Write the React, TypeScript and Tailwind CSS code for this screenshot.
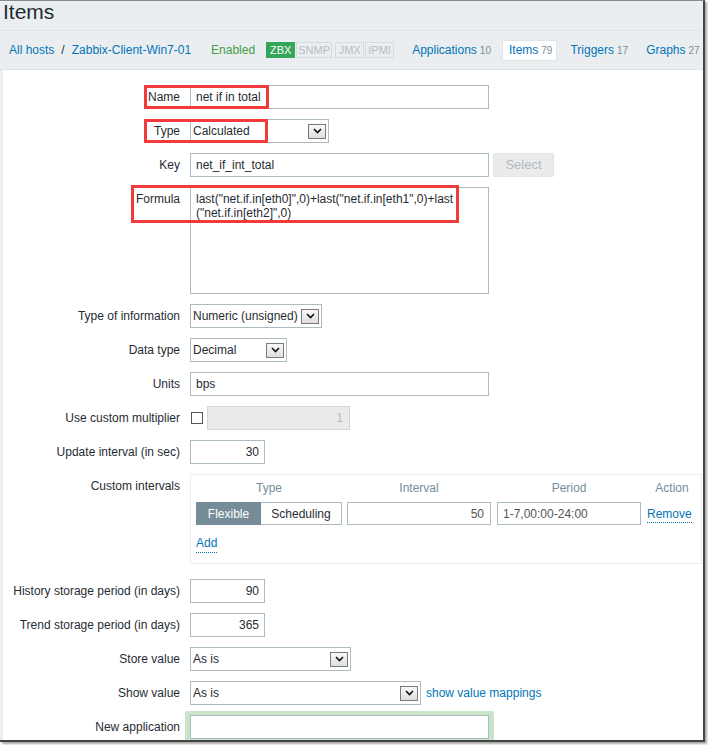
import React from "react";

const LABEL = "w-[177px] shrink-0 text-right text-[12px] leading-[14px] text-[#1f2c33]";
const INPUT =
  "h-[24px] border border-[#acbbc2] bg-white px-[5px] text-[12px] text-[#1f2c33] flex items-center";
const LINK = "text-[#0275b8]";
const BADGE = "h-[16px] border flex items-center justify-center";

function Chevron() {
  return (
    <svg width="9" height="6" viewBox="0 0 9 6">
      <path d="M1 1 L4.5 4.5 L8 1" fill="none" stroke="#111" strokeWidth="1.6" />
    </svg>
  );
}

function Select({ width, value }: { width: string; value: string }) {
  return (
    <div
      className={`${width} h-[24px] border border-[#acbbc2] bg-white flex items-center justify-between pl-[2px] pr-[2px] text-[12px] text-[#1f2c33]`}
    >
      <span className="whitespace-nowrap">{value}</span>
      <span className="w-[18px] h-[15px] border border-[#7a7a7a] bg-gradient-to-b from-[#fafafa] to-[#dedede] flex items-center justify-center">
        <Chevron />
      </span>
    </div>
  );
}

function Row({
  label,
  top,
  children,
  className = "",
}: {
  label: string;
  top?: boolean;
  children: React.ReactNode;
  className?: string;
}) {
  return (
    <div className={`flex ${top ? "items-start" : "items-center"} ${className}`}>
      <div className={`${LABEL} ${top ? "pt-[5px]" : ""}`}>{label}</div>
      <div className="ml-[10px] flex items-center">{children}</div>
    </div>
  );
}

function Tab({ name, count, active }: { name: string; count: string; active?: boolean }) {
  return (
    <div
      className={`h-[21px] pl-[6px] pr-[4px] flex items-center rounded-[2px] border ${
        active ? "bg-white border-[#dfe4e7]" : "border-transparent"
      }`}
    >
      <span className={LINK}>{name}</span>
      <span className="ml-[3px] text-[10px] text-[#768d99]">{count}</span>
    </div>
  );
}

export default function App() {
  return (
    <div className="w-[708px] h-[745px] bg-white overflow-hidden font-['Liberation_Sans',Arial,sans-serif]">
      <div className="w-[705px] h-[742px] border-t border-t-[#8a8a8a] border-r-2 border-r-[#444] border-b-2 border-b-[#444] shadow-[2px_2px_2px_rgba(0,0,0,0.35)] bg-[#ebeef0] flex flex-col overflow-hidden">
        <div className="h-[30px] shrink-0 border-b border-[#dfe4e7] pl-[3px]">
          <h1 className="text-[21px] leading-[22px] text-[#1f2c33]">Items</h1>
        </div>

        <div className="h-[39px] shrink-0 border-b border-[#dfe4e7] flex items-center pl-[9px] text-[12px] whitespace-nowrap">
          <span className={LINK}>All hosts</span>
          <span className="mx-[7px] text-[#1f2c33]">/</span>
          <span className={LINK}>Zabbix-Client-Win7-01</span>
          <span className="ml-[20px] text-[#429e47]">Enabled</span>
          <div className="ml-[11px] flex items-center text-[11px]">
            <span className={`${BADGE} w-[29px] border-[#34a65a] bg-[#34a65a] text-white`}>ZBX</span>
            <span className={`${BADGE} ml-[1px] w-[36px] border-[#d5dbde] text-[#b4c0c6]`}>SNMP</span>
            <span className={`${BADGE} ml-[3px] w-[29px] border-[#d5dbde] text-[#b4c0c6]`}>JMX</span>
            <span className={`${BADGE} ml-[1px] w-[29px] border-[#d5dbde] text-[#b4c0c6]`}>IPMI</span>
          </div>
          <div className="ml-[11px] flex items-center gap-[6px]">
            <Tab name="Applications" count="10" />
            <Tab name="Items" count="79" active />
            <Tab name="Triggers" count="17" />
            <Tab name="Graphs" count="27" />
          </div>
        </div>

        <div className="relative ml-[3px] flex-1 bg-white">
          <div className="flex flex-col gap-[10px] pt-[15px]">
            <Row label="Name">
              <div className={`${INPUT} w-[299px]`}>net if in total</div>
            </Row>
            <Row label="Type">
              <Select width="w-[139px]" value="Calculated" />
            </Row>
            <Row label="Key">
              <div className={`${INPUT} w-[299px]`}>net_if_int_total</div>
              <div className="ml-[4px] h-[24px] w-[61px] rounded-[2px] border border-[#dfe4e7] bg-[#ebebeb] flex items-center justify-center text-[13px] text-[#acbbc2]">
                Select
              </div>
            </Row>
            <Row label="Formula" top>
              <div className="w-[299px] h-[107px] border border-[#acbbc2] bg-white px-[5px] pt-[4px] text-[12px] leading-[14px] text-[#1f2c33] whitespace-pre">
                <div>last("net.if.in[eth0]",0)+last("net.if.in[eth1",0)+last</div>
                <div>("net.if.in[eth2]",0)</div>
              </div>
            </Row>
            <Row label="Type of information">
              <Select width="w-[132px]" value="Numeric (unsigned)" />
            </Row>
            <Row label="Data type">
              <Select width="w-[97px]" value="Decimal" />
            </Row>
            <Row label="Units">
              <div className={`${INPUT} w-[299px]`}>bps</div>
            </Row>
            <Row label="Use custom multiplier">
              <span className="ml-[1px] w-[12px] h-[12px] border border-[#555] bg-white" />
              <div className="ml-[4px] h-[24px] w-[143px] border border-[#d6d6d6] bg-[#ebebeb] px-[6px] flex items-center justify-end text-[12px] text-[#acbbc2]">
                1
              </div>
            </Row>
            <Row label="Update interval (in sec)">
              <div className={`${INPUT} w-[75px] justify-end`}>30</div>
            </Row>
            <Row label="Custom intervals" top className="mb-[5px]">
              <div className="w-[512px] h-[90px] border border-[#ebeef0] pl-[5px] pt-[6px] text-[12px]">
                <div className="flex gap-[5px] leading-[14px] text-[#768d99] text-center">
                  <div className="w-[146px]">Type</div>
                  <div className="w-[144px]">Interval</div>
                  <div className="ml-[1px] w-[144px]">Period</div>
                  <div className="ml-[1px] w-[50px]">Action</div>
                </div>
                <div className="mt-[7px] flex items-center gap-[5px]">
                  <div className="flex h-[23px] w-[146px]">
                    <div className="w-[65px] bg-[#768d99] border border-[#768d99] text-white flex items-center justify-center">
                      Flexible
                    </div>
                    <div className="flex-1 border border-[#acbbc2] border-l-0 text-[#1f2c33] flex items-center justify-center">
                      Scheduling
                    </div>
                  </div>
                  <div className="h-[23px] w-[144px] border border-[#acbbc2] px-[6px] flex items-center justify-end text-[#555]">
                    50
                  </div>
                  <div className="ml-[1px] h-[23px] w-[144px] border border-[#acbbc2] px-[5px] flex items-center text-[#555]">
                    1-7,00:00-24:00
                  </div>
                  <div className="ml-[1px] w-[50px]">
                    <span className={`${LINK} inline-block leading-[16px] border-b border-dotted border-[#0275b8]`}>
                      Remove
                    </span>
                  </div>
                </div>
                <div className="mt-[9px]">
                  <span className={`${LINK} inline-block leading-[18px] border-b border-dotted border-[#0275b8]`}>
                    Add
                  </span>
                </div>
              </div>
            </Row>
            <Row label="History storage period (in days)">
              <div className={`${INPUT} w-[75px] justify-end`}>90</div>
            </Row>
            <Row label="Trend storage period (in days)">
              <div className={`${INPUT} w-[75px] justify-end`}>365</div>
            </Row>
            <Row label="Store value">
              <Select width="w-[161px]" value="As is" />
            </Row>
            <Row label="Show value">
              <Select width="w-[231px]" value="As is" />
              <span className={`ml-[5px] text-[12px] ${LINK}`}>show value mappings</span>
            </Row>
            <div className="flex items-start -mt-[4px]">
              <div className={`${LABEL} pt-[9px]`}>New application</div>
              <div className="ml-[5px] bg-[#c8e5ca] rounded-t-[2px] px-[5px] pt-[4px] pb-[6px]">
                <div className={`${INPUT} w-[299px]`} />
              </div>
            </div>
          </div>

          {/* annotation boxes */}
          <div className="absolute left-[141px] top-[15px] w-[125px] h-[24px] border-[3px] border-[#f23a3a]" />
          <div className="absolute left-[141px] top-[49px] w-[124px] h-[24px] border-[3px] border-[#f23a3a]" />
          <div className="absolute left-[128px] top-[115px] w-[328px] h-[38px] border-[3px] border-[#f23a3a]" />
        </div>
      </div>
    </div>
  );
}
